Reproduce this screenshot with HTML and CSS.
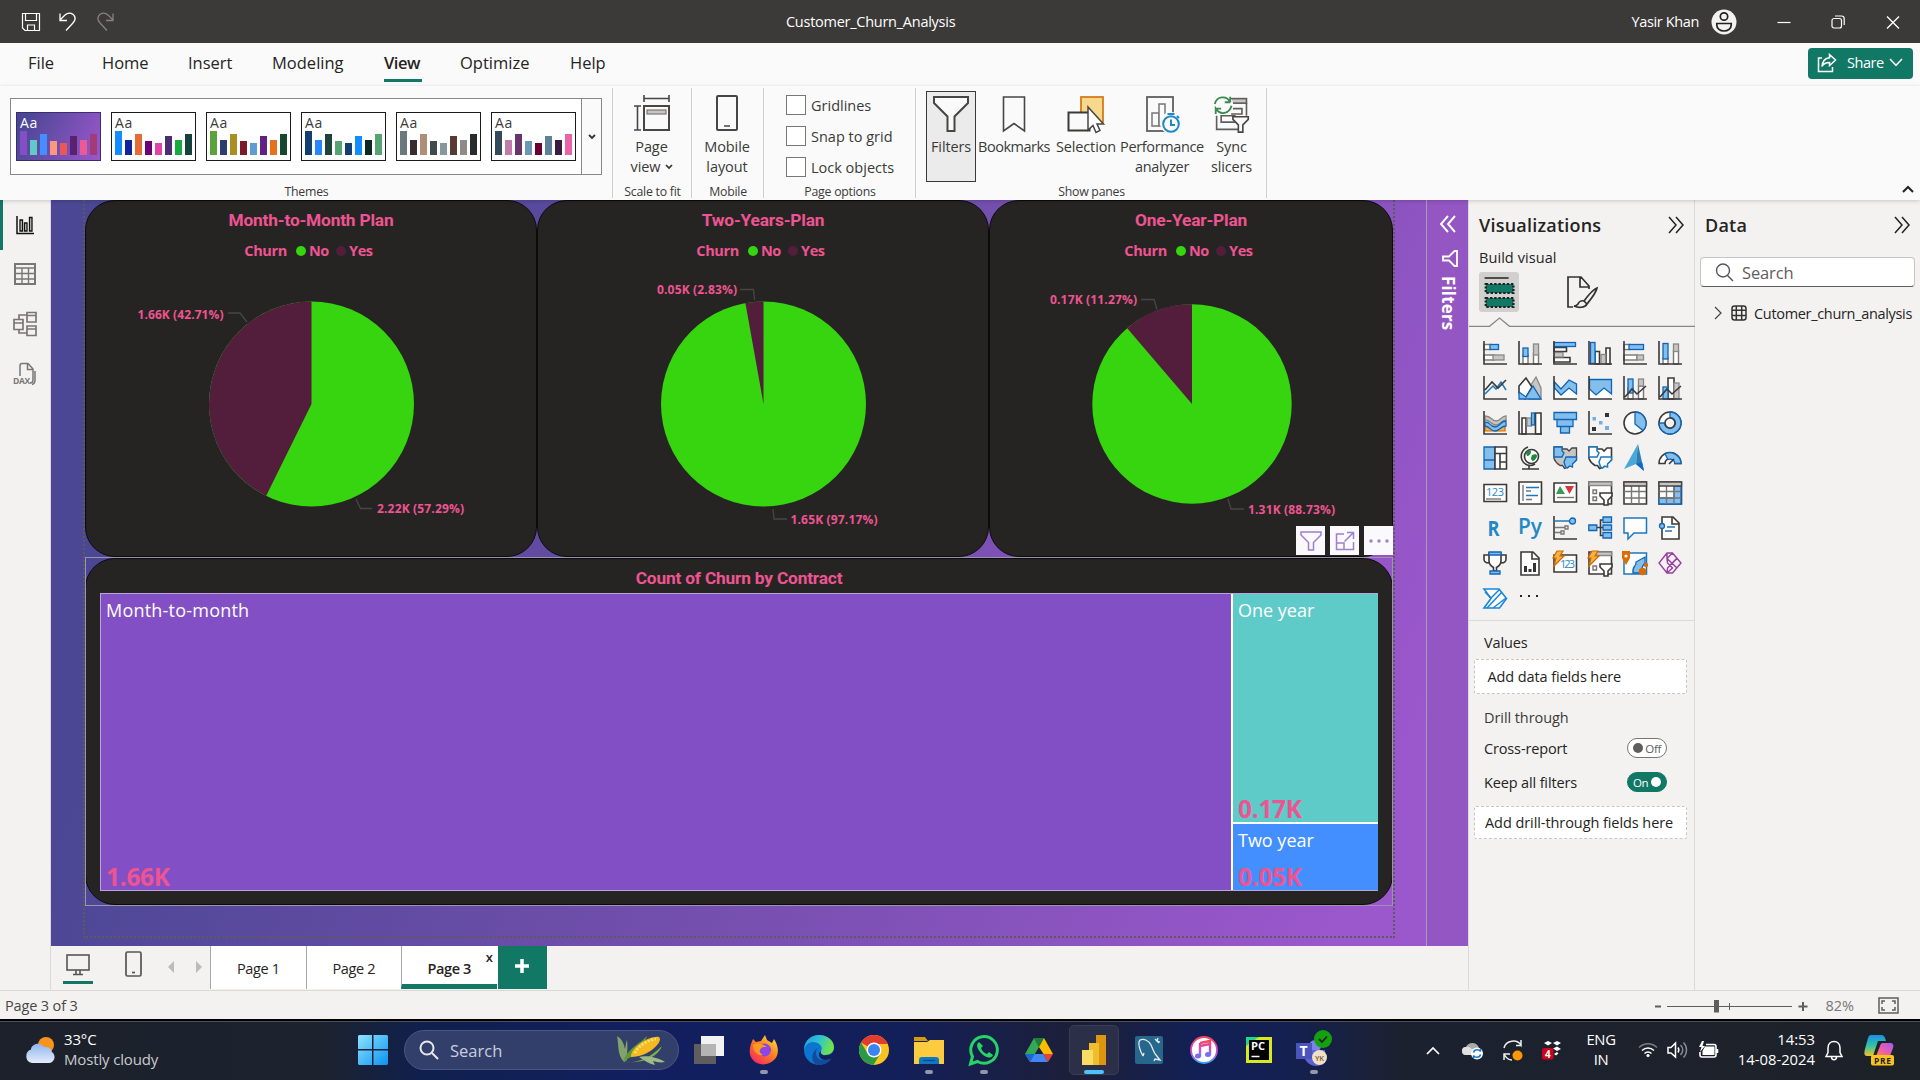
FILE: index.html
```
<!DOCTYPE html>
<html lang="en">
<head>
<meta charset="utf-8">
<title>Customer_Churn_Analysis</title>
<link rel="stylesheet" href="styles.css">
</head>
<body>
<div class="app">

<header class="titlebar">
  <div class="quick">
    <svg width="20" height="20" viewBox="0 0 20 20" fill="none" stroke="#fff" stroke-width="1.2"><path d="M1.5 1.5h17v17H4l-2.500-2.500zM4.500 1.500v7h11v-7M6.500 18.500v-5.500h7v5.500"/></svg>
    <svg width="20" height="20" viewBox="0 0 20 20" fill="none" stroke="#fff" stroke-width="1.3"><path d="M2 1.500v7h7M2 8l5-5c4-3.500 9-1.500 10 2.500 .7 3-1 4.500-2.500 6L8 18.500"/></svg>
    <svg width="20" height="20" viewBox="0 0 20 20" fill="none" stroke="#85827f" stroke-width="1.3"><path d="M18 1.500v7h-7M18 8l-5-5c-4-3.500-9-1.500-10 2.500-.7 3 1 4.500 2.500 6l6.500 7"/></svg>
  </div>
  <div class="doc-title">Customer_Churn_Analysis</div>
  <div class="account">
    <span class="user">Yasir Khan</span>
    <svg width="26" height="26" viewBox="0 0 26 26"><circle cx="13" cy="13" r="12.500" fill="#f3f2f1"/><g fill="none" stroke="#222" stroke-width="1.700"><circle cx="13" cy="7.500" r="3.700"/><path d="M5.800 14.500h14.400v1.500c0 3.500-3.200 6-7.200 6s-7.200-2.500-7.200-6z"/></g></svg>
    <svg class="win" width="14" height="14" viewBox="0 0 14 14" stroke="#fff" stroke-width="1.200"><path d="M.5 7.500h13"/></svg>
    <svg class="win" width="14" height="14" viewBox="0 0 14 14" fill="none" stroke="#fff" stroke-width="1.200"><rect x="1" y="3.500" width="9.500" height="9.500" rx="2"/><path d="M4 1h6.500c1.500 0 2.700 1.200 2.700 2.700V10"/></svg>
    <svg class="win last" width="14" height="14" viewBox="0 0 14 14" stroke="#fff" stroke-width="1.300"><path d="M1 1.500l12 12M13 1.500l-12 12"/></svg>
  </div>
</header>

<nav class="menubar">
  <span class="m m1">File</span><span class="m m2">Home</span><span class="m m3">Insert</span><span class="m m4">Modeling</span><span class="m m5 active">View</span><span class="m m6">Optimize</span><span class="m m7">Help</span>
  <button class="share">
    <svg width="20" height="20" viewBox="0 0 20 20" fill="none" stroke="#fff" stroke-width="1.500"><path d="M5 5H1.500v13.500h14V14"/><path d="M12.500 1.500l6 5.500-6 5.500V9.500c-4 0-6 1-7.500 4C5.500 8.500 8 5 12.500 4.700z"/></svg>
    <span>Share</span>
    <svg width="14" height="9" viewBox="0 0 14 9" fill="none" stroke="#fff" stroke-width="1.500"><path d="M1 1l6 6.300L13 1"/></svg>
  </button>
</nav>

<section class="ribbon">
  <div class="group g-themes">
    <div class="gallery">
      <div class="thumbs">
        <div class="thumb dark"><b>Aa</b><div class="bars"><i style="height:24px;background:#8250c4"></i><i style="height:15px;background:#5ecbc8"></i><i style="height:21px;background:#438fff"></i><i style="height:14px;background:#ff977e"></i><i style="height:12px;background:#eb5757"></i><i style="height:19px;background:#5b2071"></i><i style="height:15px;background:#ec5a96"></i><i style="height:21px;background:#a43b76"></i></div></div>
        <div class="thumb"><b>Aa</b><div class="bars"><i style="height:24px;background:#118dff"></i><i style="height:15px;background:#12239e"></i><i style="height:21px;background:#e66c37"></i><i style="height:14px;background:#6b007b"></i><i style="height:12px;background:#e044a7"></i><i style="height:19px;background:#4a2d75"></i><i style="height:15px;background:#1aab40"></i><i style="height:21px;background:#15423c"></i></div></div>
        <div class="thumb"><b>Aa</b><div class="bars"><i style="height:24px;background:#5ba33b"></i><i style="height:15px;background:#2f3c6e"></i><i style="height:21px;background:#a98e22"></i><i style="height:14px;background:#7b1a2a"></i><i style="height:12px;background:#5f9bd5"></i><i style="height:19px;background:#5f2185"></i><i style="height:15px;background:#e6711d"></i><i style="height:21px;background:#16482f"></i></div></div>
        <div class="thumb"><b>Aa</b><div class="bars"><i style="height:24px;background:#133e70"></i><i style="height:15px;background:#2487ff"></i><i style="height:21px;background:#1e423e"></i><i style="height:14px;background:#56a374"></i><i style="height:12px;background:#133e70"></i><i style="height:19px;background:#118dff"></i><i style="height:15px;background:#0d2622"></i><i style="height:21px;background:#56a374"></i></div></div>
        <div class="thumb"><b>Aa</b><div class="bars"><i style="height:24px;background:#6b797e"></i><i style="height:15px;background:#372b2b"></i><i style="height:21px;background:#b08d76"></i><i style="height:14px;background:#41494b"></i><i style="height:12px;background:#87989c"></i><i style="height:19px;background:#593a33"></i><i style="height:15px;background:#918b88"></i><i style="height:21px;background:#262c2e"></i></div></div>
        <div class="thumb"><b>Aa</b><div class="bars"><i style="height:24px;background:#344a5b"></i><i style="height:15px;background:#c07bab"></i><i style="height:21px;background:#65356b"></i><i style="height:14px;background:#6b98b6"></i><i style="height:12px;background:#6b0032"></i><i style="height:19px;background:#5c8199"></i><i style="height:15px;background:#3a1c40"></i><i style="height:21px;background:#ea62a8"></i></div></div>
      </div>
      <div class="more"><svg width="8" height="6" viewBox="0 0 8 6" fill="none" stroke="#333" stroke-width="1.800"><path d="M1 1l3 3 3-3"/></svg></div>
    </div>
    <div class="glabel">Themes</div>
  </div>

  <div class="group g-scale">
    <div class="tool">
      <svg width="38" height="38" viewBox="0 0 38 38" fill="none" stroke="#484644" stroke-width="1.600"><path d="M11 4.500h25M11 1v7M36 1v7M4.500 12v24M1 12h7M1 36h7"/><rect x="11" y="12" width="25" height="24" fill="#fafafa" stroke-width="2"/><rect x="14" y="16" width="19" height="4" fill="#c8c6c4" stroke="#797775" stroke-width="1.200"/></svg>
      <span>Page</span><span>view <svg width="8" height="6" viewBox="0 0 8 6" fill="none" stroke="#333" stroke-width="1.700"><path d="M1 1l3 3 3-3"/></svg></span>
    </div>
    <div class="glabel">Scale to fit</div>
  </div>

  <div class="group g-mobile">
    <div class="tool">
      <svg width="38" height="38" viewBox="0 0 38 38" fill="#fafafa" stroke="#484644" stroke-width="2"><rect x="9" y="2" width="20" height="34" rx="1"/><path d="M16 32h6" stroke-width="1.500"/></svg>
      <span>Mobile</span><span>layout</span>
    </div>
    <div class="glabel">Mobile</div>
  </div>

  <div class="group g-opts">
    <div class="checks">
      <label><i></i>Gridlines</label><label><i></i>Snap to grid</label><label><i></i>Lock objects</label>
    </div>
    <div class="glabel">Page options</div>
  </div>

  <div class="group g-panes">
    <div class="tools">
      <div class="tool t-filters on">
        <svg width="38" height="38" viewBox="0 0 38 38" fill="#fafafa" stroke="#484644" stroke-width="2"><path d="M2 2h34v6L22.500 21.500V36h-7V21.500L2 8z"/></svg>
        <span>Filters</span>
      </div>
      <div class="tool t-book">
        <svg width="38" height="38" viewBox="0 0 38 38" fill="#fafafa" stroke="#484644" stroke-width="1.600"><path d="M8.500 2h21v34l-10.500-7.500L8.500 36z"/></svg>
        <span>Bookmarks</span>
      </div>
      <div class="tool t-sel">
        <svg width="38" height="38" viewBox="0 0 38 38"><rect x="14" y="2" width="22" height="25" fill="#f8d88c" stroke="#d47b1a" stroke-width="1.800"/><rect x="1.500" y="17.500" width="21" height="18" fill="#fafafa" stroke="#3b3a39" stroke-width="2"/><path d="M21 12v23l5-4.500 3 7 4-2-3-6.500h6.500z" fill="#fff" stroke="#484644" stroke-width="1.500"/></svg>
        <span>Selection</span>
      </div>
      <div class="tool t-perf">
        <svg width="38" height="38" viewBox="0 0 38 38" fill="#fafafa" stroke="#605e5c" stroke-width="1.800"><rect x="4" y="2" width="26" height="34"/><g stroke="#797775" stroke-width="1.500"><rect x="9" y="18" width="7" height="13"/><rect x="16" y="9" width="6" height="22"/></g><circle cx="28" cy="28" r="11" stroke="none"/><circle cx="28" cy="29" r="7.800" stroke="#2088c5" stroke-width="2"/><path d="M24.500 19h7M34 21l2 2M28 24.500V30h4" stroke="#2088c5" stroke-width="2"/></svg>
        <span>Performance</span><span>analyzer</span>
      </div>
      <div class="tool t-sync">
        <svg width="42" height="42" viewBox="0 0 42 42" fill="none" stroke="#605e5c" stroke-width="1.800"><rect x="18" y="4" width="19" height="5" fill="#c8c6c4"/><path d="M37 9v14M22 15h10v6H20M26 30H9v-7h16M4 23v15h25"/><circle cx="11.500" cy="11" r="11" fill="#fafafa" stroke="none"/><g stroke="#388a4d" stroke-width="2"><path d="M2 10C4 1 15 0 19 8V2M19 8h-6M20.500 12C18 21 8 23 3 15v6M3 15h6"/></g><path d="M22 24h17v3l-6 6v8h-5v-8l-6-6z" fill="#fafafa" stroke="#484644"/></svg>
        <span>Sync</span><span>slicers</span>
      </div>
    </div>
    <div class="glabel">Show panes</div>
  </div>
  <svg class="collapse" width="12" height="8" viewBox="0 0 12 8" fill="none" stroke="#222" stroke-width="2"><path d="M1 7l5-5 5 5"/></svg>
</section>

<main class="main">
  <aside class="rail">
    <div class="railitem sel"><svg width="22" height="22" viewBox="0 0 22 22" fill="#c8c6c4" stroke="#111" stroke-width="1.500"><path d="M3 2v17.500h17" fill="none"/><path d="M6 17V6h2.500v11zM10.500 17V9H13v8zM15.500 17V3.500H18V17z" stroke-width="1.300"/></svg></div>
    <div class="railitem"><svg width="22" height="22" viewBox="0 0 22 22" fill="none" stroke="#797775" stroke-width="1.400"><rect x="1" y="1" width="20" height="20" stroke-width="2"/><path d="M1 5h20M1 10.500h20M1 16h20M8 5v16M14.500 5v16"/></svg></div>
    <div class="railitem"><svg width="24" height="26" viewBox="0 0 24 26" fill="none" stroke="#797775" stroke-width="1.700"><path d="M1 8.500h9v10H1zM1 12h9M14 1.500h9v9.500h-9zM14 4.500h9M14 15h9v9.500h-9zM14 18h9M6 8V4h8M6 19v3h8"/></svg></div>
    <div class="railitem"><svg width="24" height="24" viewBox="0 0 24 24" fill="none" stroke="#797775" stroke-width="1.500"><path d="M7 14V4c0-1.500.7-2.500 2-2.500h6l5 5.500v11c0 1.500-1 3-3 3M14.500 2v5.500h5M22 9v9c0 2.500-1 4-3 4.500"/><text x="0" y="22" font-size="8.500" font-weight="700" fill="#797775" stroke="none" textLength="17">DAX</text></svg></div>
  </aside>

  <div class="report">
    <div class="workspace">
      <div class="canvas">
        <div class="page">
          <div class="cards">
            <article class="card c1">
              <h3>Month-to-Month Plan</h3>
              <div class="legend"><span>Churn</span><i class="no"></i><span class="n">No</span><i class="yes"></i><span>Yes</span></div>
              <svg class="pie" width="451" height="277" viewBox="0 0 451 277"><circle cx="225.500" cy="124" r="102.500" fill="#37d410"/><path d="M225.500 124V21.500A102.500 102.500 0 0 0 180.100 215.900z" fill="#521e3c"/><g class="lead"><path d="M142 33h12l7 9M270 219l4.500 9.500H286"/></g><text x="51.500" y="39" textLength="86">1.66K (42.71%)</text><text x="291" y="233" textLength="87">2.22K (57.29%)</text></svg>
            </article>
            <article class="card c2">
              <h3>Two-Years-Plan</h3>
              <div class="legend"><span>Churn</span><i class="no"></i><span class="n">No</span><i class="yes"></i><span>Yes</span></div>
              <svg class="pie" width="451" height="277" viewBox="0 0 451 277"><circle cx="225.500" cy="124" r="102.500" fill="#37d410"/><path d="M225.500 124V21.500A102.500 102.500 0 0 0 207.400 23.100z" fill="#521e3c"/><g class="lead"><path d="M202 9.500h13.500l1 10.500M235 229l1 10h13"/></g><text x="119" y="14" textLength="80">0.05K (2.83%)</text><text x="252.500" y="244" textLength="87">1.65K (97.17%)</text></svg>
            </article>
            <article class="card c3">
              <h3>One-Year-Plan</h3>
              <div class="legend"><span>Churn</span><i class="no"></i><span class="n">No</span><i class="yes"></i><span>Yes</span></div>
              <svg class="pie" width="404" height="277" viewBox="0 0 404 277"><circle cx="202" cy="124" r="99.700" fill="#37d410"/><path d="M202 124V24.300A99.700 99.700 0 0 0 137.200 48.200z" fill="#521e3c"/><g class="lead"><path d="M151 19.500h13l3 10M238 219l3 10h13"/></g><text x="60" y="24" textLength="87">0.17K (11.27%)</text><text x="258" y="234" textLength="87">1.31K (88.73%)</text></svg>
            </article>
          </div>
          <div class="selected">
            <article class="card c4">
              <h3>Count of Churn by Contract</h3>
              <div class="treemap">
                <div class="cell big"><span>Month-to-month</span><b>1.66K</b></div>
                <div class="cell one"><span>One year</span><b>0.17K</b></div>
                <div class="cell two"><span>Two year</span><b>0.05K</b></div>
              </div>
            </article>
            <div class="hover-tools">
              <i><svg width="22" height="20" viewBox="0 0 22 20" fill="none" stroke="#a07fd0" stroke-width="1.500"><path d="M1 1h20v3l-7.500 7.500V19h-5v-7.500L1 4z"/></svg></i>
              <i><svg width="20" height="20" viewBox="0 0 20 20" fill="none" stroke="#a07fd0" stroke-width="1.500"><path d="M9 3H1.500v15.500h17V11M1.500 12h7.500v6.500M9.500 10.500L18 2M12 1.500h6.500V8"/></svg></i>
              <i><svg width="20" height="4" viewBox="0 0 20 4" fill="#a07fd0"><circle cx="2" cy="2" r="1.700"/><circle cx="10" cy="2" r="1.700"/><circle cx="18" cy="2" r="1.700"/></svg></i>
            </div>
          </div>
        </div>
      </div>
      <aside class="filterpane">
        <svg width="18" height="18" viewBox="0 0 18 18" fill="none" stroke="#fff" stroke-width="1.900"><path d="M9 1L2 9l7 8M16 1L9 9l7 8"/></svg>
        <svg width="16" height="17" viewBox="0 0 16 17" fill="none" stroke="#fff" stroke-width="1.800"><path d="M15 1v15h-2.500L7 10.500H1v-4h6L12.500 1z"/></svg>
        <span>Filters</span>
      </aside>
    </div>
    <div class="pagetabs">
      <div class="device on"><svg width="24" height="22" viewBox="0 0 24 22" fill="none" stroke="#555" stroke-width="1.600"><rect x="1" y="1" width="22" height="15"/><path d="M10 16v4M14 16v4M7 20.500h10"/></svg></div>
      <div class="device phone"><svg width="17" height="26" viewBox="0 0 17 26" fill="none" stroke="#555" stroke-width="1.700"><rect x="1" y="1" width="15" height="24" rx="1.500"/><path d="M7 21.500h3"/></svg></div>
      <svg class="arr a1" width="6" height="12" viewBox="0 0 6 12" fill="#bdbbb9"><path d="M6 0v12L0 6z"/></svg>
      <svg class="arr a2" width="6" height="12" viewBox="0 0 6 12" fill="#bdbbb9"><path d="M0 0v12l6-6z"/></svg>
      <div class="ptab">Page 1</div><div class="ptab">Page 2</div><div class="ptab cur">Page 3<em>x</em></div>
      <div class="add"><svg width="14" height="14" viewBox="0 0 14 14" stroke="#fff" stroke-width="3.500"><path d="M7 0v14M0 7h14"/></svg></div>
    </div>
  </div>

  <aside class="viz">
    <div class="phead"><h2>Visualizations</h2><svg width="17" height="18" viewBox="0 0 17 18" fill="none" stroke="#222" stroke-width="1.500"><path d="M1 1l7 8-7 8M8 1l7 8-7 8"/></svg></div>
    <div class="sub">Build visual</div>
    <div class="modes">
      <div class="mode sel"><svg width="26" height="34" viewBox="0 0 26 34"><path d="M1 3h20" stroke="#222" stroke-width="1.500"/><rect x="2" y="9" width="23" height="9" fill="#117865" stroke="#222" stroke-width="2" stroke-dasharray="2 1.500"/><rect x="2" y="23" width="23" height="9" fill="#117865" stroke="#222" stroke-width="2" stroke-dasharray="2 1.500"/></svg></div>
      <div class="mode"><svg width="32" height="32" viewBox="0 0 32 32" fill="none" stroke="#333" stroke-width="1.700"><path d="M7 31H2V1h13l8 9v3M14 1v10h9M31 12c-5 2-10 9-13 13l3 3c4-5 9-11 10-16zM18 25c-4-1-5 1-6 3-1 1.500-2 2-4 2 4 2 11 2 13-2"/></svg></div>
    </div>
    <svg class="caret" width="226" height="10" viewBox="0 0 226 10" fill="none" stroke="#8a8886" stroke-width="1.300"><path d="M0 9.300h20.500L30.500 1l10 8.300H226"/></svg>
    <div class="icons">
      <svg viewBox="0 0 24 24"><g class="w g"><rect x="1" y="3.500" width="7" height="5"/><rect x="1" y="14" width="10" height="5"/></g><rect class="b" x="7" y="3.500" width="8.500" height="5"/><rect class="gr" x="10" y="14" width="11" height="5"/><path class="k" d="M1 0v23h23"/></svg>
      <svg viewBox="0 0 24 24"><rect class="w g" x="5" y="14" width="5" height="9"/><rect class="w g" x="15.500" y="12" width="5" height="11"/><rect class="b" x="5" y="7" width="5" height="8.500"/><rect class="gr" x="15.500" y="3" width="5" height="11"/><path class="k" d="M1 0v23h23"/></svg>
      <svg viewBox="0 0 24 24"><path class="w k" d="M1 6.500h12.500v4H1zM1 16.500h16v4.500H1z"/><rect class="gr" x="1" y="11.500" width="9" height="4.500"/><rect class="b" x="1" y="1.500" width="21.500" height="4"/><path class="k" d="M1 0v23h23"/></svg>
      <svg viewBox="0 0 24 24"><path class="w k" d="M7 10.500h4.500V23H7zM18 7h4v16h-4z"/><rect class="gr" x="13" y="13.500" width="4.500" height="9.500"/><rect class="b" x="2.500" y="1.500" width="4.500" height="21"/><path class="k" d="M1 0v23h23"/></svg>
      <svg viewBox="0 0 24 24"><g class="w g"><rect x="1" y="3.500" width="6" height="5"/><rect x="1" y="14" width="13" height="5"/></g><rect class="b" x="6" y="3.500" width="14.500" height="5"/><rect class="gr" x="14" y="14" width="6.500" height="5"/><path class="k" d="M1 0v23h23"/></svg>
      <svg viewBox="0 0 24 24"><rect class="w g" x="5" y="17" width="5" height="6"/><rect class="w g" x="15.500" y="10" width="5" height="13"/><rect class="b" x="5" y="2.500" width="5" height="15.500"/><rect class="gr" x="15.500" y="3" width="5" height="7.500"/><path class="k" d="M1 0v23h23"/></svg>

      <svg viewBox="0 0 24 24"><path class="bl" d="M2 18l8-8 3 3 5-7 5 8"/><path class="k" d="M2 14l7-8 6 6 8-8M1 0v23h23"/></svg>
      <svg viewBox="0 0 24 24"><path class="gr" d="M11 23V12l7-11 5 11v11z"/><path class="w k" d="M1 17V10l7-8 6 9-7 12z"/><path class="b" d="M1 16l7 5 7-11 8 13H1z"/></svg>
      <svg viewBox="0 0 24 24"><path class="w" d="M2 12l6 7 8-7 8 6v4H2z" stroke="none"/><path class="b" d="M1.500 6l6.500 7 8-9 7.500 4v10l-7.500-6-8 7-6.500-7z"/><path class="k" d="M1 0v23h23"/></svg>
      <svg viewBox="0 0 24 24"><path class="w" d="M2 12h22v10H2z"/><path class="b" d="M1.500 3.500h22V18L16 12l-8 7-6.500-6z"/><path class="k" d="M1 0v23h23"/></svg>
      <svg viewBox="0 0 24 24"><path class="w g" d="M5 12h5v11H5zM15.500 10h5v13h-5z"/><rect class="b" x="5" y="3" width="5" height="14"/><rect class="gr" x="15.500" y="3" width="5" height="7"/><path class="k" d="M1 0v23h23M2 21l7-8 5 5 9-8"/></svg>
      <svg viewBox="0 0 24 24"><path class="w k" d="M10 2h6v21h-6z"/><rect class="b" x="5" y="11" width="5" height="12"/><rect class="gr" x="16" y="7" width="5" height="16"/><path class="k" d="M1 0v23h23M2 21l7-8 5 5 9-8"/></svg>

      <svg viewBox="0 0 24 24"><path class="o" d="M2 15h20v5H2z"/><path class="gr" d="M2 5c7 0 6 5 11 5s5-5 10-5v4c-5 0-5 5-10 5S8 9 2 9z"/><path class="b" d="M2 11c6 0 5 5 10 5s5-6 11-6v5c-6 0-6 5-11 5S8 16 2 15z"/><path class="k" d="M1 0v23h23"/></svg>
      <svg viewBox="0 0 24 24"><path class="w k" d="M4 7h4v16H4zM17.500 2H23v21h-5.500z"/><rect class="gr" x="9" y="7" width="4.500" height="8"/><rect class="b" x="13.500" y="2" width="3" height="12"/><path class="k" d="M1 0v23h23"/></svg>
      <svg viewBox="0 0 24 24"><path class="b" d="M1 1.500h22.500v7H1zM4 8.500h16v7H4zM7.500 15.500h9v6.500h-9z"/></svg>
      <svg viewBox="0 0 24 24"><path class="k" d="M1 0v23h23"/><path d="M17 2h4v4h-4zM4 16h4v4H4z" fill="#333"/><path d="M4.500 6H8v3.500H4.500zM11 10h3.500v3.500H11zM17 15h4v4h-4z" fill="#71afe5"/></svg>
      <svg viewBox="0 0 24 24"><circle class="w k" cx="12" cy="12" r="11"/><path class="b" d="M12 1a11 11 0 0 1 8 18.500L12 13z"/></svg>
      <svg viewBox="0 0 24 24"><circle class="w k" cx="12" cy="12" r="11"/><path class="b" d="M12 1A11 11 0 1 1 1 12h5.500A5.500 5.500 0 1 0 12 6.500z"/><circle class="hole k" cx="12" cy="12" r="5"/></svg>

      <svg viewBox="0 0 24 24"><path class="b" d="M1 1h11v22H1zM1 14h11"/><path class="w k" d="M12 1h11.500v6.500H12zM12 7.500h5V23h-5zM17 7.500h6.500V16H17zM17 16h6.500v7H17z"/></svg>
      <svg viewBox="0 0 24 24"><circle class="w k" cx="13.500" cy="10.500" r="7"/><path d="M8 7c2-3 5-3 5-1s-2 4-4 4zM14 9c3-1 5-1 5 1s-3 5-4 5-2-2-2-3z" fill="#1f8a3e"/><path class="k" d="M10 1C4 3 2 9 4 14s8 7 13 4M11 19v4M4 23h17"/></svg>
      <svg viewBox="0 0 24 24"><path class="gr kk" d="M1 1h8v2h5l2 2 3-3h4.500v12c-3 3-6 4-8 7l-4 1.500-2-3H7c-3-2-5-4-6-7z"/><path class="b" d="M1 1h8v4l2 2-2 4H1zM11 16l2-5h10.500v3l-4 4v3l-3-1-2 2-2-1z"/></svg>
      <svg viewBox="0 0 24 24"><path class="w k" d="M1 1h8v2h5l2 2 3-3h4.500v12c-3 3-6 4-8 7l-4 1.500-2-3H7c-3-2-5-4-6-7z"/><path class="w bl" d="M1 1h8v4l2 2-2 4H1zM11 16l2-5h10.500v3l-4 4v3l-3-1-2 2-2-1z"/></svg>
      <svg viewBox="0 0 24 24"><path d="M15-2L1 23l12-5z" fill="#4aa8d8"/><path d="M15-2l6 27-8-7z" fill="#2b7fb5"/><path d="M13 18l8 7-2-9z" fill="#1068c9"/></svg>
      <svg viewBox="0 0 24 24"><path class="w k" d="M1 17.500a11 11 0 0 1 22 0h-6a5 5 0 0 0-10 0z"/><path class="b" d="M7 8a11 11 0 0 1 16 9.500h-6a5 5 0 0 0-7-4z"/><path class="k" d="M11 18l5-5" stroke-width="2.500"/></svg>

      <svg viewBox="0 0 24 24"><path class="w k" d="M1 3.500h22.500v17H1z"/><text x="3" y="15" font-size="11" fill="#2b88c8" textLength="18">123</text><path class="g" d="M3 18h15"/></svg>
      <svg viewBox="0 0 24 24"><path class="w k" d="M1 1h22.500v22H1z"/><path class="g" d="M5 4v16M8 10h5M8 18.500h6"/><path class="bl" d="M8 6.500h13M8 14.500h12" stroke-width="2.200"/></svg>
      <svg viewBox="0 0 24 24"><path class="w k" d="M1 2h22.500v19H1z"/><path d="M3 13l4-8 5 8z" fill="#3a9a4f"/><path d="M12 5h9l-4.500 8z" fill="#d9343c"/><path class="g" d="M4 16.500h17"/></svg>
      <svg viewBox="0 0 24 24"><path class="w k" d="M1 1h22.500v22H1z"/><path class="gr" d="M1 1h22.500v3.500H1z"/><path class="g" d="M5 9h3.500v3.500H5zM5 16h3.500v3.500H5z"/><path class="w k" d="M12 12h12v3l-4 4v5h-4v-5l-4-4z"/></svg>
      <svg viewBox="0 0 24 24"><path class="w k" d="M1 1h22.500v22H1z"/><path class="g" d="M1 10.500h22M1 17h22M8.500 5v18M16 5v18"/><path class="gr kk" d="M1 1h22.500v4H1z"/></svg>
      <svg viewBox="0 0 24 24"><path class="w k" d="M1 1h22.500v22H1z"/><path class="b" d="M16 5h7v18H1v-6h15z"/><path class="g" d="M1 10.500h22M1 17h22M8.500 5v18M16 5v18"/><path class="gr kk" d="M1 1h22.500v4H1z"/></svg>

      <svg viewBox="0 0 24 24"><text x="4.500" y="20" font-size="22" font-weight="700" fill="#2288c5" textLength="12" lengthAdjust="spacingAndGlyphs">R</text></svg>
      <svg viewBox="0 0 24 24"><text x="0" y="18" font-size="21" font-weight="600" fill="#2288c5" textLength="24" lengthAdjust="spacingAndGlyphs">Py</text></svg>
      <svg viewBox="0 0 24 24"><path class="k" d="M1 0v23h23"/><path class="g" d="M2 11.500h10M2 16.500h6M12 10h3v3h-3zM8 15h3v3H8z"/><path class="bl" d="M2 5h14"/><circle class="b" cx="19.500" cy="5" r="3"/></svg>
      <svg viewBox="0 0 24 24"><path class="k" d="M8 11.500h8M16 4h-3.500v15.500H16"/><path class="b" d="M.8 9h8v5.500h-8zM15 1h8.500v5.500H15zM15 9h8.500v5H15zM15 16.500h8.500v5.500H15z"/></svg>
      <svg viewBox="0 0 24 24"><path class="w bl" d="M1 2h22.500v15H11l-6 6v-6H1z"/></svg>
      <svg viewBox="0 0 24 24"><path class="w k" d="M4 1h11l6 6v16H4z"/><path class="k" d="M14 1v7h7"/><path class="bl" d="M9 11h8M7 15h7"/><circle class="b" cx="4" cy="10" r="2.500"/></svg>

      <svg viewBox="0 0 24 24"><path class="w k" d="M6 2h12v8c0 3-2 5-4.500 6.500V20h-3v-3.500C8 15 6 13 6 10zM6 4H1v4c0 3 2 4 5 4M18 4h5v4c0 3-2 4-5 4"/><path class="b" d="M6 1h12v3H6zM7 20h10v3H7z"/></svg>
      <svg viewBox="0 0 24 24"><path class="w k" d="M3 1h12l6 6v17H3z"/><path class="k" d="M14 1v7h7"/><path d="M6 15h3v6H6zM10.500 18h3v3h-3zM15 12h3v9h-3z" fill="#333"/></svg>
      <svg viewBox="0 0 24 24"><path class="w k" d="M1 4h22.500v17H1z"/><text x="7" y="17" font-size="11" fill="#2b88c8" textLength="15">123</text><path class="o" d="M4 0h6L7 5h4L1 15l2-8H0z"/></svg>
      <svg viewBox="0 0 24 24"><path class="w k" d="M1 1h22.500v22H1z"/><path class="gr" d="M8 1h15.500v3.500H8z"/><path class="g" d="M5 15h3.500v4H5z"/><path class="w k" d="M12 13h12v3l-4 4v5h-4v-5l-4-4z"/><path class="o" d="M4 0h6L7 5h4L1 15l2-8H0z"/></svg>
      <svg viewBox="0 0 24 24"><path class="w bl" d="M1 2h22.500v21H1z"/><path class="b" d="M10 22c-1-8 4-6 3-11l9-5v7c-4 0-2 9-6 9z" stroke-width=".8"/><path d="M-1 0h8v7l-4 7-4-7z" fill="#dd6b00"/><circle cx="3" cy="5" r="1.600" fill="#fff"/><circle cx="19.500" cy="20.500" r="3.700" fill="#dd6b00"/><circle cx="23" cy="14" r="2.200" fill="#dd6b00"/></svg>
      <svg viewBox="0 0 24 24" fill="none" stroke="#9b3fa3" stroke-width="1.400"><path d="M9 2h5.500L23 12l-8.500 10H9L1 12zM14.500 2L9 7.500 19 17M9 22l5.500-5L9.500 12l-.5-4.500M19 7L9.500 17 9 22M14.500 12l5-5M9 2v5.500"/></svg>

      <svg viewBox="0 0 24 24"><path class="w" d="M1 3h15l7.500 9.500-7 9.500H1l7-9.500z" stroke="#1a86d9" stroke-width="1.600"/><path d="M2 6l6 6M4 22L19 6M10 22L23 12M8 12l8-8" fill="none" stroke="#1a86d9" stroke-width="1.500"/></svg>
      <svg viewBox="0 0 24 24" fill="#222"><path d="M2 9h2v2H2zM10 9h2v2h-2zM18 9h2v2h-2z"/></svg>
    </div>
    <div class="fields">
      <div class="lab">Values</div>
      <div class="well w1">Add data fields here</div>
      <div class="lab semi">Drill through</div>
      <div class="row"><span>Cross-report</span><span class="toggle"><i></i>Off</span></div>
      <div class="row r2"><span>Keep all filters</span><span class="toggle on">On<i></i></span></div>
      <div class="well w2">Add drill-through fields here</div>
    </div>
  </aside>

  <aside class="data">
    <div class="phead"><h2>Data</h2><svg width="17" height="18" viewBox="0 0 17 18" fill="none" stroke="#222" stroke-width="1.500"><path d="M1 1l7 8-7 8M8 1l7 8-7 8"/></svg></div>
    <div class="search"><svg width="19" height="19" viewBox="0 0 19 19" fill="none" stroke="#555" stroke-width="1.400"><circle cx="8" cy="7.500" r="6.500"/><path d="M12.500 12.500l5.500 5.500"/></svg><span>Search</span></div>
    <div class="table"><svg width="8" height="14" viewBox="0 0 8 14" fill="none" stroke="#444" stroke-width="1.200"><path d="M1 1l6 6-6 6"/></svg><svg width="16" height="16" viewBox="0 0 16 16" fill="none" stroke="#333" stroke-width="1.500"><rect x="1" y="1" width="14" height="14" rx="2.500"/><path d="M1 5.300h14M1 10.500h14M5.300 1v14M10.700 1v14"/></svg><span>Cutomer_churn_analysis</span></div>
  </aside>
</main>

<footer class="status">
  <span>Page 3 of 3</span>
  <div class="zoom">
    <svg width="153" height="16" viewBox="0 0 153 16" fill="none" stroke="#605e5c"><path d="M0 8.500h6" stroke-width="2"/><path d="M12 8.500h125M74.500 5v7"/><path d="M59 2h5v12.500h-5z" fill="#605e5c" stroke="none"/><path d="M143.500 8.500h9M148 4v9" stroke-width="2"/></svg>
    <span>82%</span>
    <svg width="21" height="17" viewBox="0 0 21 17" fill="none" stroke="#605e5c" stroke-width="1.500"><rect x="1" y="1" width="19" height="15"/><path d="M4 7V4h3M14 4h3v3M4 10v3h3M17 10v3h-3"/></svg>
  </div>
</footer>

<footer class="taskbar">
  <div class="weather">
    <svg width="32" height="28" viewBox="0 0 32 28"><defs><linearGradient id="cl" x1="0" y1="0" x2="0" y2="1"><stop offset="0" stop-color="#8fb4ef"/><stop offset="1" stop-color="#e4ecfb"/></linearGradient></defs><circle cx="22" cy="9" r="8" fill="#f7941d"/><path d="M8 27a7 7 0 0 1-1-13.500C7 8 16 5 20 11c6 0 7 2 8 5 5 4 2 11-3 11z" fill="url(#cl)"/></svg>
    <div><span>33°C</span><span class="dim">Mostly cloudy</span></div>
  </div>
  <svg class="start" width="30" height="30" viewBox="0 0 30 30"><defs><linearGradient id="st" x1="0" y1="0" x2="1" y2="1"><stop offset="0" stop-color="#8fe3fb"/><stop offset="1" stop-color="#0a93f2"/></linearGradient></defs><path d="M1 0h13v14H0V1zM15.500 0H29l1 1v13H15.500zM0 15.500h14V30H1l-1-1zM15.500 15.500H30V29l-1 1H15.500z" fill="url(#st)"/></svg>
  <div class="tsearch">
    <svg width="20" height="20" viewBox="0 0 20 20" fill="none" stroke="#e6e8ee" stroke-width="2"><circle cx="8" cy="8" r="6.500"/><path d="M13 13l6 6"/></svg>
    <span>Search</span>
    <svg class="corn" width="50" height="30" viewBox="0 0 50 30"><path d="M7 27C0 20 2 10 0 1c5 3 7 8 8 13 1-5 1-7 2-9 1 6 0 12 0 20z" fill="#7fa36b"/><path d="M6 26C12 12 24 8 30 1c-2 8-8 18-14 20z" fill="#5f9a3a"/><path d="M14 22C13 12 34 0 42 2c5 4-10 20-28 20z" fill="#f5b921"/><path d="M18 18c3-7 13-13 21-14" stroke="#ffe27a" stroke-width="2.500" stroke-dasharray="2 1.500" fill="none"/><path d="M5 27c12 2 26-2 40-16-5 12-20 18-40 16z" fill="#7db344"/><path d="M22 22c8-2 20 1 26 5-5 1-8 0-12-1l2 4c-5-1-10-4-16-8z" fill="#9dbb86"/></svg>
  </div>
  <div class="apps">
    <div class="app-i"><svg width="32" height="32" viewBox="0 0 32 32"><path d="M1 10h22v20H1z" fill="#5e5e60"/><path d="M8 2h23v20H8z" fill="#f2f2f2"/><path d="M8 10h15v12H8z" fill="#b4b4b4"/></svg></div>
    <div class="app-i run"><svg width="32" height="32" viewBox="0 0 32 32"><defs><linearGradient id="ff" x1="1" y1="0" x2=".2" y2="1"><stop offset="0" stop-color="#fff04a"/><stop offset=".45" stop-color="#ff8a1f"/><stop offset="1" stop-color="#f6265f"/></linearGradient></defs><path d="M3 10l2-5 3 3 5-1 4-6 2 5 5 3 2-4c5 8 5 15 1 20-6 7-17 7-22 1C1 22 1 16 3 10z" fill="url(#ff)"/><circle cx="16.500" cy="16" r="6.500" fill="#8b45e8"/><path d="M5 11c5-3 10-1 14 2-3 0-6 0-7 3-1 2 1 4 3 5-6 1-10-4-10-10z" fill="#ff9a1f"/></svg></div>
    <div class="app-i"><svg width="32" height="32" viewBox="0 0 32 32"><defs><linearGradient id="ed" x1="0" y1="0" x2="1" y2=".3"><stop offset="0" stop-color="#1f9de0"/><stop offset=".5" stop-color="#2cc0d8"/><stop offset="1" stop-color="#6fe34e"/></linearGradient></defs><circle cx="16" cy="16" r="15" fill="#0d75d0"/><path d="M1 16C1 6 9 1 16 1c9 0 15 6 15 12 0 5-4 8-9 8-4 0-5-2-4-4 3-5-3-9-8-9-5 0-8 4-9 8z" fill="url(#ed)"/><path d="M15 14c-4 4-2 12 5 12 4 0 7-1 9-3-3 6-9 8-14 8C7 29 8 17 15 14z" fill="#124b9c"/><path d="M18 17c-1 3 2 5 6 4 3 0 6-2 7-5l0 8-8 2c-7 0-9-7-5-9z" fill="#14205c"/></svg></div>
    <div class="app-i"><svg width="32" height="32" viewBox="0 0 32 32"><circle cx="16" cy="16" r="15" fill="#fcc31e"/><path d="M16 16L3 8.500a15 15 0 0 1 26 0L30 10H16z" fill="#e33b2e"/><path d="M3 8.500A15 15 0 0 0 15.500 31L22 20 10 20z" fill="#2a9a47"/><circle cx="16" cy="16" r="7.500" fill="#fff"/><circle cx="16" cy="16" r="6" fill="#3b83f0"/></svg></div>
    <div class="app-i run"><svg width="32" height="32" viewBox="0 0 32 32"><path d="M1 3h11l3 4H1z" fill="#d99a06"/><path d="M1 8h13l3-2h14v24H1z" fill="#fdcb3f"/><path d="M6 30v-4q0-3 3-3h14q3 0 3 3v4z" fill="#0f78c4"/><path d="M10 26.500h12" stroke="#0a4a86" stroke-width="1.200"/></svg></div>
    <div class="app-i run"><svg width="32" height="32" viewBox="0 0 32 32"><path d="M2.500 30l2-7.500a13.300 13.300 0 1 1 5 5z" fill="none" stroke="#25d366" stroke-width="3"/><path d="M11 8c-4 3-1 8 3 12s9 5 11 1l-4-3-2 2c-3-1-5-3-6-6l2-2z" fill="#25d366"/></svg></div>
    <div class="app-i"><svg width="32" height="32" viewBox="0 0 32 32"><path d="M11 4h10L16 13z" fill="#188038"/><path d="M11 4L2 20l5 8 9-15z" fill="#34a853"/><path d="M21 4l9 16H20.500L16 13z" fill="#fbbc04"/><path d="M7 28l4.500-8h9l4.500 8z" fill="#4285f4"/><path d="M20.500 20H30l-5 8z" fill="#ea4335"/><path d="M2 20h9.500L7 28z" fill="#1967d2"/></svg></div>
    <div class="app-i current"><svg width="32" height="32" viewBox="0 0 32 32"><path d="M18 1h10v30H18z" fill="#dc960f"/><path d="M11 9h10v22H11z" fill="#efbe2c"/><path d="M4 16h11v15H4z" fill="#f9dc65"/></svg></div>
    <div class="app-i"><svg width="32" height="32" viewBox="0 0 32 32"><rect x="2" y="2" width="28" height="28" rx="2" fill="#28678c"/><path d="M10 22l-2-4C6 13 5 8 7 6c4-2 9 1 11 5s3 8 5 10l4 5-5-1-1 2M10 22l1 -3M22 5l4 4M25 4l-1 3 3 1" fill="none" stroke="#e4eef4" stroke-width="1.300"/></svg></div>
    <div class="app-i"><svg width="32" height="32" viewBox="0 0 32 32"><defs><linearGradient id="it" x1="0" y1="0" x2="0" y2="1"><stop offset="0" stop-color="#fb4459"/><stop offset=".6" stop-color="#c94be0"/><stop offset="1" stop-color="#37a3f5"/></linearGradient></defs><circle cx="16" cy="16" r="13" fill="#fff" stroke="url(#it)" stroke-width="1.800"/><path d="M12 9l10-2v13M12 9v13M12 12l10-2" fill="none" stroke="url(#it)" stroke-width="2.400"/><ellipse cx="10" cy="22" rx="3" ry="2.500" fill="#7a6cf0"/><ellipse cx="20" cy="20.500" rx="3" ry="2.500" fill="#7a6cf0"/></svg></div>
    <div class="app-i"><svg width="32" height="32" viewBox="0 0 32 32"><path d="M3 3h26v26H3z" fill="#d6ea1e"/><path d="M3 3h13L3 12z" fill="#21d789"/><path d="M6 6h20v20H6z" fill="#000"/><text x="8" y="16" font-size="10.500" font-weight="700" fill="#fff" textLength="14" lengthAdjust="spacingAndGlyphs">PC</text><path d="M8.500 22.500h8" stroke="#fff" stroke-width="1.500"/></svg></div>
    <div class="app-i run"><svg width="42" height="40" viewBox="0 0 42 40"><circle cx="22" cy="16" r="6" fill="#7b83eb"/><path d="M12 20h20v7c0 6-4 9-9 9s-9-3-11-7z" fill="#5b62d6"/><path d="M3 13h16v16H3z" fill="#4b53bc"/><text x="6.500" y="26" font-size="14" font-weight="700" fill="#fff">T</text><circle cx="26.500" cy="27.500" r="7.500" fill="#efe0c6"/><text x="22" y="30.500" font-size="7.500" fill="#7a5a33" font-weight="600" textLength="9">YK</text><circle cx="30" cy="9" r="9" fill="#13a10e"/><path d="M26 9l3 3 5-5.500" fill="none" stroke="#222" stroke-width="1.800"/></svg></div>
  </div>
  <div class="tray">
    <svg class="t1" width="14" height="9" viewBox="0 0 14 9" fill="none" stroke="#fff" stroke-width="1.700"><path d="M1 8l6-6 6 6"/></svg>
    <svg class="t2" width="22" height="20" viewBox="0 0 22 20"><path d="M4 15a4 4 0 0 1 0-8c2-5 11-6 13 1l1 7z" fill="#a9a9a9"/><path d="M4 15a4 4 0 0 1 0-8c4-1 7 2 9 8z" fill="#e0e0e0"/><circle cx="15" cy="13.500" r="6" fill="#fff"/><path d="M11.500 12.500c1-4 6-3 7-1V9M18.500 14.500c-1 4-6 3-7 1V18" fill="none" stroke="#0f78d4" stroke-width="1.500"/></svg>
    <svg class="t3" width="22" height="22" viewBox="0 0 22 22" fill="none" stroke="#eee" stroke-width="1.500"><path d="M2 9C4 1 15 0 19 6V1M19 6.500h-5M2 21v-6h6M2 15c2 4 4 6 8 6"/><circle cx="15.500" cy="16.500" r="5" fill="#ff9800" stroke="none"/></svg>
    <svg class="t4" width="22" height="20" viewBox="0 0 22 20"><path d="M6 1l4 2-4 2.500L2 3zM15 1l4 2-4 2.500L11 3zM15 6.500l4 2.500-4 2-4-2.500zM12 14l3-2 1.500 1.500-2.500 2z" fill="#fff"/><rect x="0" y="8" width="11.500" height="11.500" rx="2" fill="#d0021b"/><text x="3" y="17.500" font-size="10" font-weight="700" fill="#fff">4</text></svg>
    <div class="lang"><span>ENG</span><span>IN</span></div>
    <svg class="t5" width="20" height="16" viewBox="0 0 20 16" fill="none" stroke="#fff" stroke-width="1.500"><path d="M1 5.500c5-5 13-5 18 0" stroke="#777c88"/><path d="M4 8.500c3.500-3.500 8.500-3.500 12 0M6.500 11.500c2-2 5-2 7 0"/><circle cx="10" cy="13.500" r="1.600" fill="#fff" stroke="none"/></svg>
    <svg class="t6" width="21" height="18" viewBox="0 0 21 18" fill="none" stroke="#fff" stroke-width="1.500"><path d="M1 6.500h3L8.500 2v14L4 12H1zM11 6.500c1 1.500 1 3.500 0 5"/><path d="M13.500 4c3 3 3 7 0 10M16.500 1.500c4 4 4 11 0 15" stroke="#858994"/></svg>
    <svg class="t7" width="21" height="18" viewBox="0 0 21 18"><path d="M7 5.500h9.500v8.500H4.500v-4z" fill="#fff"/><path d="M8 3.500h8q2 0 2 2v8.500q0 2-2 2H4q-2 0-2-2V11M19.500 8v4" fill="none" stroke="#fff" stroke-width="1.600"/><path d="M4 0L1 6h2.500L2 11l5-6H4.500L6 0z" fill="#fff"/></svg>
    <div class="clock"><span>14:53</span><span>14-08-2024</span></div>
    <svg class="t8" width="18" height="21" viewBox="0 0 18 21" fill="none" stroke="#fff" stroke-width="1.500"><path d="M1 16.500l2-4V8c0-4 2.500-6.500 6-6.500S15 4 15 8v4.500l2 4zM6.500 17c0 3.500 5 3.500 5 0"/></svg>
    <svg class="t9" width="30" height="32" viewBox="0 0 30 32"><defs><linearGradient id="c1" x1="0" y1="0" x2="0" y2="1"><stop offset="0" stop-color="#1c8fe8"/><stop offset=".5" stop-color="#2fc4a4"/><stop offset="1" stop-color="#f0c22e"/></linearGradient><linearGradient id="c2" x1="1" y1="0" x2="0" y2="1"><stop offset="0" stop-color="#a05af0"/><stop offset=".6" stop-color="#ee5fa8"/><stop offset="1" stop-color="#f58b3c"/></linearGradient></defs><path d="M7 1h10c3 0 4 2 5 6H14L9 22H3c-3 0-3-3-2-7L4 4c.5-2 1.500-3 3-3z" fill="url(#c1)"/><path d="M19 9h7c3 0 4 2 3 5l-3 8H12l4-10c.5-2 1.500-3 3-3z" fill="url(#c2)"/><rect x="7" y="21" width="23" height="10.500" rx="2" fill="#f7c31c"/><text x="10" y="29.500" font-size="8.500" font-weight="700" fill="#222" textLength="17">PRE</text></svg>
  </div>
</footer>
</div>
</body>
</html>
```
FILE: styles.css
```
* { box-sizing: border-box; }
body { margin: 0; font-family: "Open Sans", "Noto Sans", sans-serif; font-size: 14.5px; letter-spacing: -0.01em; color: #252423; }
svg { flex: none; display: block; overflow: visible; }
i, em { font-style: normal; display: block; }
h2, h3 { margin: 0; }
.app { width: 1920px; height: 1080px; display: flex; flex-direction: column; overflow: hidden; background: #f3f2f1; }

/* Title bar */
.titlebar { height: 43px; background: #3b3a38; color: #fff; display: grid; grid-template-columns: 765px auto 1fr; align-items: center; padding: 0 20px 0 21px; flex: none; }
.quick { display: flex; gap: 17px; }
.doc-title { letter-spacing: -0.018em; }
.account { display: flex; align-items: center; justify-content: flex-end; }
.user { letter-spacing: -0.025em; margin-right: 12px; }
.win { margin-left: 40px; }
.win.last { margin-left: 41px; }

/* Menu */
.menubar { height: 43px; background: #fafafa; display: flex; align-items: center; padding: 0 7px 5px 28px; font-size: 16.5px; flex: none; }
.m { position: relative; letter-spacing: 0; white-space: nowrap; }
.m1 { width: 74px; } .m2 { width: 86px; } .m3 { width: 84px; } .m4 { width: 112px; } .m5 { width: 38px; margin-right: 38px; } .m6 { width: 110px; } .m7 { width: 60px; }
.m.active { font-weight: 600; letter-spacing: -0.03em; }
.m.active::after { content: ""; position: absolute; left: 0; right: 0; bottom: -8px; height: 3px; background: #117865; }
.share { margin-left: auto; margin-top: 2px; width: 105px; height: 31px; border: 0; border-radius: 4px; background: #117865; color: #fff; font: inherit; font-size: 14.5px; letter-spacing: -0.03em; display: flex; align-items: center; padding: 0 9px 1px; }
.share span { margin: 0 5px 0 10px; }

/* Ribbon */
.ribbon { height: 114px; background: #fafafa; display: flex; flex: none; position: relative; z-index: 2; box-shadow: 0 1px 4px rgba(0,0,0,.18); }
.group { position: relative; height: 112px; margin-top: 2px; display: flex; flex-direction: column; color: #3b3a39; }
.group::after { content: ""; position: absolute; right: 0; top: 0; height: 110px; border-right: 1px solid #d2d0ce; }
.glabel { margin-top: auto; height: 17px; line-height: 17px; font-size: 12.3px; letter-spacing: -0.02em; text-align: center; }
.g-themes { width: 613px; }
.g-scale { width: 79px; } .g-mobile { width: 72px; } .g-opts { width: 152px; } .g-panes { width: 351px; }
.gallery { margin: 10px 0 0 10px; width: 592px; height: 77px; border: 1px solid #8a8886; background: #fff; display: flex; }
.thumbs { flex: 1; display: flex; align-items: center; gap: 10px; padding-left: 5px; }
.thumb { width: 85px; height: 49px; border: 1px solid #1b1a19; padding: 2px 3px 5px 3px; display: flex; flex-direction: column; justify-content: space-between; background: #fff; }
.thumb b { font-weight: 400; font-size: 14px; line-height: 16px; letter-spacing: .05em; }
.thumb.dark { color: #fff; background: linear-gradient(115deg, #4b4795 10%, #9b57cc); border-color: #3a2d70; }
.bars { display: flex; align-items: flex-end; gap: 3px; height: 25px; }
.bars i { width: 7px; }
.more { width: 20px; border-left: 1px solid #8a8886; display: flex; align-items: center; justify-content: center; background: #fafafa; }
.tool { display: flex; flex-direction: column; align-items: center; padding-top: 6px; }
.tool span { line-height: 20px; white-space: nowrap; display: flex; align-items: center; gap: 4px; }
.tool svg + span { margin-top: 5px; }
.g-scale .tool, .g-mobile .tool { letter-spacing: -0.005em; margin-right: 2px; }
.checks { display: flex; flex-direction: column; gap: 11px; padding: 7px 0 0 22px; }
.checks label { display: flex; align-items: center; gap: 5px; height: 20px; white-space: nowrap; letter-spacing: 0; }
.checks i { width: 20px; height: 20px; border: 1px solid #797775; background: #fff; }
.tools { display: flex; padding-left: 10px; align-items: flex-start; }
.tools .tool { padding-top: 3px; border: 1px solid transparent; margin-top: 3px; height: 91px; }
.tools .tool svg { height: 38px; }
.tools .tool.on { background: #ebebeb; border-color: #3b3a39; width: 50px; }
.tools .tool svg + span { margin-top: 4px; }
.t-book { width: 76px; letter-spacing: -0.035em; } .t-sel { width: 68px; } .t-perf { width: 84px; letter-spacing: -0.025em; } .t-sync { width: 55px; }
.collapse { position: absolute; right: 6px; bottom: 7px; }

/* Main area */
.main { flex: 1; display: flex; min-height: 0; border-bottom: 1px solid #dbd9d7; }
.rail { width: 51px; background: #f3f2f1; border-right: 1px solid #dbd9d7; flex: none; }
.railitem { height: 50px; display: flex; align-items: center; justify-content: center; border-left: 3px solid transparent; padding: 0 3px 2px 0; }
.railitem.sel { border-color: #117865; padding-bottom: 0; }
.report { width: 1417px; display: flex; flex-direction: column; }
.workspace { height: 746px; display: flex; background: linear-gradient(113deg, #4b4795 16%, #6f4eaa 50%, #9b57cc 92%); }
.canvas { flex: 1; padding-left: 32px; border-right: 1px solid #a99bb9; overflow: hidden; }
.page { width: 1312px; height: 738px; border: 2px dotted #5d5a5c; border-top: 0; }
.cards { display: flex; height: 357px; }
.card { position: relative; background: #252423; border: 1px solid #0b0b0d; border-radius: 30px; color: #ee5491; text-align: center; }
.c1, .c2 { width: 452px; } .c3 { width: 404px; }
.card h3 { font: 700 17.3px/24px Roboto, sans-serif; letter-spacing: -0.01em; padding-top: 7px; }
.legend { display: flex; align-items: center; justify-content: center; height: 22px; margin-top: 7px; padding-right: 5px; font-weight: 700; font-size: 14.5px; letter-spacing: -0.025em; }
.legend i { width: 10px; height: 10px; border-radius: 50%; margin-top: 1px; }
.legend .no { background: #37d410; margin-left: 9px; margin-right: 3px; }
.legend .yes { background: #521e3c; margin-left: 7px; margin-right: 3px; }
.pie { margin-top: 19px; margin-left: -0.5px; }
.pie text { font: 700 12px "Open Sans", sans-serif; fill: #ee5491; letter-spacing: 0; }
.lead path { fill: none; stroke: #484644; stroke-width: 1.3; }
.selected { position: relative; height: 349px; padding: 1px 0; }
.selected::before { content: ""; position: absolute; inset: 0; border: 1.5px solid #9d94a8; z-index: 1; }
.c4 { height: 347px; }
.c4 h3 { padding-top: 7px; }
.treemap { margin: 3px 14px 0; height: 298px; display: grid; grid-template: 230px 1fr / 1132px 1fr; border: 1px solid #b9a4dc; border-right: 0; text-align: left; color: #fff; letter-spacing: 0; }
.cell { display: flex; flex-direction: column; justify-content: space-between; padding: 3px 5px 0; font-size: 18px; line-height: 26px; }
.cell b { color: #ee5491; font-size: 24.5px; line-height: 27px; letter-spacing: -0.012em; }
.big { grid-row: 1 / 3; background: #8250c4; letter-spacing: .012em; border-right: 2px solid #fff; }
.one { background: #5ecbc8; border-bottom: 2px solid #fff; }
.two { background: #438fff; }
.hover-tools { position: absolute; right: 0; top: -31px; display: flex; gap: 5px; z-index: 2; }
.hover-tools i { width: 29px; height: 29px; background: #faf9fb; display: flex; align-items: center; justify-content: center; }
.filterpane { width: 41px; background: #9356c2; display: flex; flex-direction: column; align-items: center; padding: 15px 0 0 1px; color: #fff; font-weight: 700; font-size: 17px; }
.filterpane svg + svg { margin: 17px 0 0 4px; }
.filterpane span { writing-mode: vertical-rl; margin-top: 9px; letter-spacing: .01em; }

/* Page tabs */
.pagetabs { flex: 1; display: flex; background: #f3f2f1; align-items: flex-start; }
.device { height: 38px; width: 30px; margin-left: 12px; padding: 8px 3px 0; border-bottom: 3px solid transparent; }
.device.on { border-color: #117865; }
.phone { margin-left: 29px; padding-top: 5px; }
.arr { margin: 15px 0 0 16px; }
.a2 { margin-left: 22px; margin-right: 8px; }
.ptab { position: relative; height: 43px; width: 95.5px; border-left: 1px solid #aaa8a6; background: #fff; text-align: center; line-height: 46px; letter-spacing: -0.025em; }
.ptab.cur { font-weight: 600; border-bottom: 5px solid #117865; }
.ptab em { position: absolute; right: 4px; top: 1px; font-size: 13px; line-height: 21px; }
.add { width: 50px; height: 43px; background: #117865; border-left: 1px solid #fff; display: flex; align-items: center; justify-content: center; padding-bottom: 3px; }

/* Right panes */
.viz { width: 227px; border-left: 1px solid #dbd9d7; border-right: 1px solid #dbd9d7; }
.phead { display: flex; justify-content: space-between; align-items: center; height: 50px; padding: 0 9px 0 10px; }
.phead h2 { font-size: 18px; font-weight: 600; letter-spacing: .012em; }
.sub { padding-left: 10px; line-height: 16px; letter-spacing: .005em; }
.modes { display: flex; padding: 6px 0 0 10px; gap: 43px; }
.mode { width: 40px; height: 40px; border-radius: 3px; display: flex; align-items: center; justify-content: center; }
.mode.sel { background: #d2d0ce; }
.mode.sel svg { transform: scaleX(1.2); }
.caret { margin-top: 5px; }
.icons { display: grid; grid-template-columns: repeat(6, 24px); grid-auto-rows: 24px; gap: 11px; padding: 14px 0 0 13.5px; height: 294px; border-bottom: 1px solid #dbd9d7; }
.icons svg { width: 24px; height: 24px; letter-spacing: 0; }
.icons .g { fill: none; stroke: #797775; stroke-width: 1.4; }
.icons .w { fill: #fdfdfd; }
.icons .k { stroke: #3b3a39; stroke-width: 1.6; }
.icons path.k:not(.w), .icons path.bl:not(.w) { fill: none; }
.icons .hole { fill: #f3f2f1; }
.icons .b { fill: #83beec; stroke: #1066b5; stroke-width: 1.3; }
.icons .gr { fill: #c8c6c4; stroke: #8a8886; stroke-width: 1.3; }
.icons .kk { stroke: #484644; }
.icons .bl { stroke: #1b78bd; stroke-width: 1.5; }
.icons .o { fill: #fbb040; stroke: #d06a00; stroke-width: 1.2; }
.fields { padding: 0 7px 0 5px; }
.fields .lab { padding: 11px 0 0 10px; line-height: 22px; }
.fields .semi { font-weight: 500; padding-top: 13px; color: #3b3a39; letter-spacing: -0.005em; }
.well { background: #fff; border: 1.5px dashed #c8c6c4; border-radius: 2px; display: flex; align-items: center; white-space: nowrap; }
.w1 { height: 35px; padding-left: 12.5px; margin-top: 5px; letter-spacing: -0.007em; }
.w2 { height: 33px; padding-left: 10px; margin-top: 14px; letter-spacing: -0.005em; }
.row { display: flex; justify-content: space-between; align-items: center; height: 20px; margin: 9px 20px 0 10px; }
.r2 { margin-top: 14px; }
.toggle { width: 40px; height: 20px; border: 1px solid #797775; border-radius: 10px; background: #fff; display: flex; align-items: center; justify-content: space-between; padding: 0 5px; font-size: 11.5px; color: #605e5c; letter-spacing: -0.03em; }
.toggle i { width: 10px; height: 10px; border-radius: 50%; background: #605e5c; }
.toggle.on { background: #117865; border-color: #117865; color: #fff; }
.toggle.on i { background: #fff; }
.data { flex: 1; }
.data .phead { padding: 0 9px 0 10px; }
.search { margin: 7px 5px 0; height: 30px; border: 1px solid #c8c6c4; border-bottom-color: #605e5c; border-radius: 4px; background: #fff; display: flex; align-items: center; padding-left: 14px; gap: 8px; font-size: 16.5px; color: #605e5c; }
.table { display: flex; align-items: center; margin-top: 14px; padding-left: 19px; height: 24px; letter-spacing: -0.022em; }
.table svg + svg { margin: 0 7px 0 9px; }

/* Status bar */
.status { height: 28px; flex: none; display: flex; align-items: center; justify-content: space-between; padding: 1px 21px 0 5px; color: #484644; }
.zoom { display: flex; align-items: center; }
.zoom span { margin: 0 24px 0 17px; color: #797775; letter-spacing: 0; }

/* Taskbar */
.taskbar { height: 61px; flex: none; border-top: 2px solid #000; box-shadow: inset 0 1px #4a4f5a; display: flex; align-items: center; color: #fff; padding: 0 0 1px 24px; background: linear-gradient(90deg, #1c212b 0, #1c222e 320px, #10204d 420px, #121f60 640px, #131f58 900px, #1d1f38 1080px, #122057 1200px, #142050 1290px, #1c2130 1400px, #1d2228 1920px); }
.weather { display: flex; gap: 8px; width: 334px; }
.weather div { display: flex; flex-direction: column; font-size: 15px; line-height: 20px; letter-spacing: -0.01em; margin-top: -2px; }
.weather svg { margin-top: 5px; }
.dim { color: #c9cbd0; }
.tsearch { margin-left: 16px; width: 275px; height: 40px; border-radius: 20px; background: #333f6b; border: 1px solid #4b5683; display: flex; align-items: center; padding-left: 14px; font-size: 16.5px; color: #c9cede; gap: 11px; letter-spacing: 0; }
.corn { margin-left: 104px; }
.apps { display: flex; margin-left: 5px; gap: 5px; }
.app-i { position: relative; width: 50px; height: 50px; border-radius: 5px; display: flex; align-items: center; justify-content: center; letter-spacing: 0; }
.app-i.run::after, .app-i.current::after { content: ""; position: absolute; bottom: 1px; left: 21px; width: 8px; height: 4px; border-radius: 2px; background: #9298ab; }
.app-i.current { background: #2c2f48; border: 1px solid #3a3d55; }
.app-i.current::after { left: 14px; width: 20px; background: #4cc2ff; bottom: 0; }
.tray { display: flex; align-items: center; margin-left: 87px; letter-spacing: 0; }
.t2 { margin-left: 22px; } .t3 { margin-left: 18px; } .t4 { margin-left: 18px; }
.lang, .clock { display: flex; flex-direction: column; line-height: 20px; font-size: 14.8px; margin-top: -2px; }
.lang { width: 34px; align-items: center; margin-left: 20px; letter-spacing: -0.02em; }
.t5 { margin-left: 20px; } .t6 { margin-left: 9px; } .t7 { margin-left: 10px; }
.clock { width: 80px; align-items: flex-end; margin-left: 16px; }
.t8 { margin-left: 10px; } .t9 { margin-left: 21px; }
```
